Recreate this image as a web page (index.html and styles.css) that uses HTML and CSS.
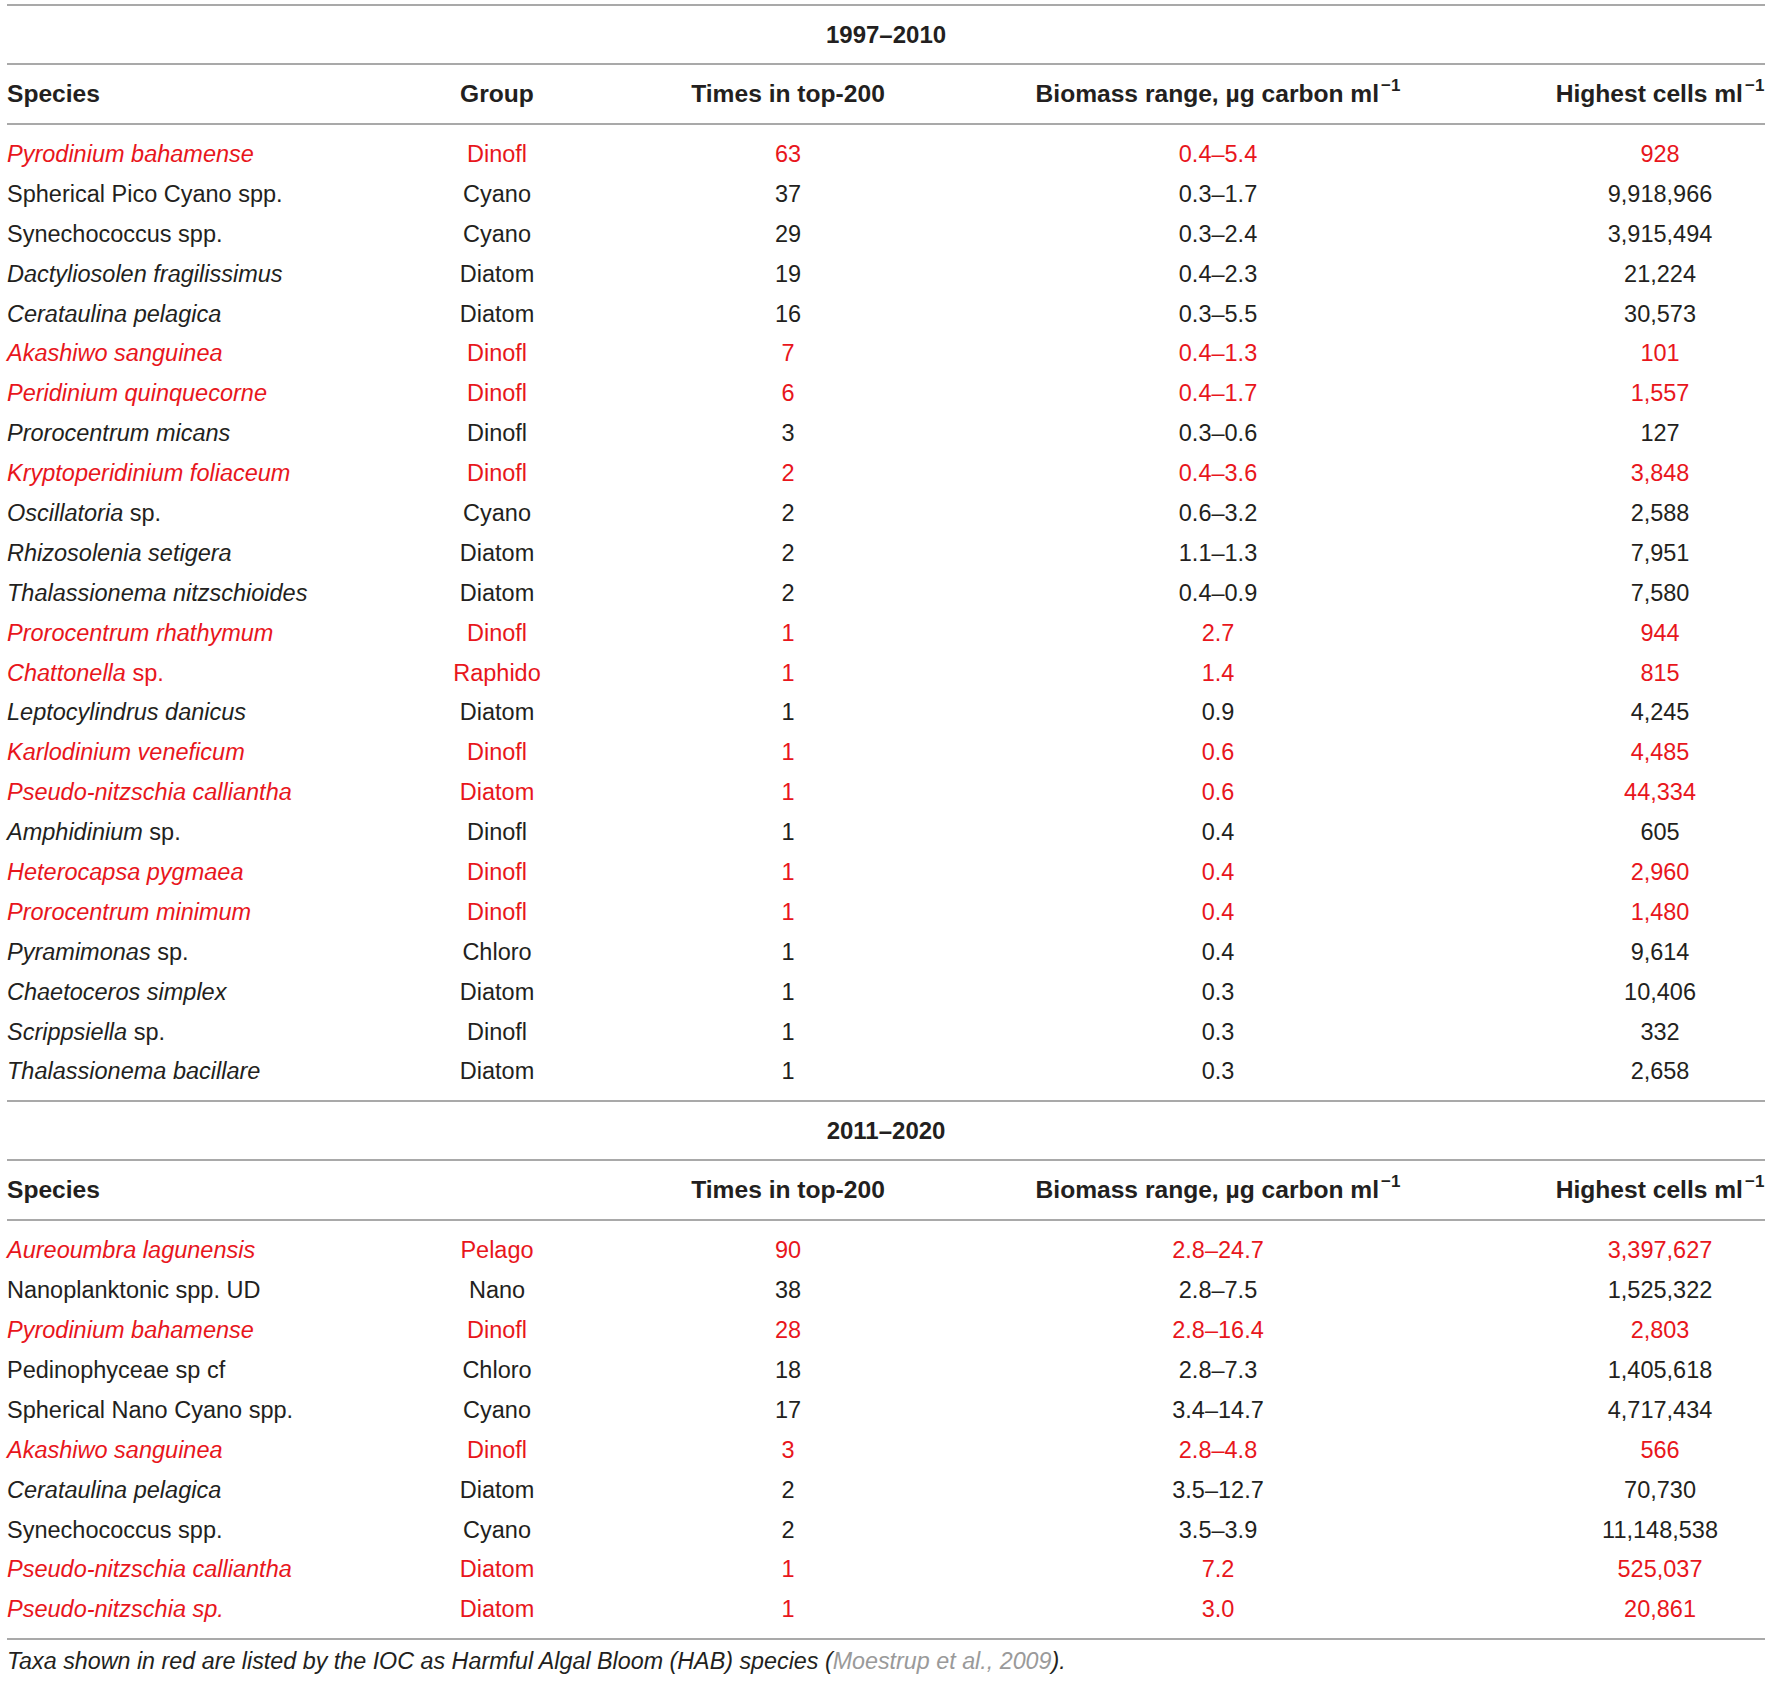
FILE: index.html
```html
<!DOCTYPE html>
<html lang="en">
<head>
<meta charset="utf-8">
<title>Top-200 phytoplankton taxa</title>
<link rel="stylesheet" href="styles.css">
</head>
<body>
<div class="wrap">
<table class="tbl">
<colgroup>
<col class="c-species"><col class="c-group"><col class="c-times"><col class="c-bio"><col class="c-high">
</colgroup>
<tbody>
<tr class="period"><th colspan="5">1997–2010</th></tr>
<tr class="head">
<th class="sp">Species</th><th>Group</th><th>Times in top-200</th><th>Biomass range, µg carbon ml<sup>−1</sup></th><th class="hi">Highest cells ml<sup>−1</sup></th>
</tr>
<tr class="hab first"><td class="sp"><i>Pyrodinium bahamense</i></td><td>Dinofl</td><td>63</td><td>0.4–5.4</td><td class="hi">928</td></tr>
<tr><td class="sp">Spherical Pico Cyano spp.</td><td>Cyano</td><td>37</td><td>0.3–1.7</td><td class="hi">9,918,966</td></tr>
<tr><td class="sp">Synechococcus spp.</td><td>Cyano</td><td>29</td><td>0.3–2.4</td><td class="hi">3,915,494</td></tr>
<tr><td class="sp"><i>Dactyliosolen fragilissimus</i></td><td>Diatom</td><td>19</td><td>0.4–2.3</td><td class="hi">21,224</td></tr>
<tr><td class="sp"><i>Cerataulina pelagica</i></td><td>Diatom</td><td>16</td><td>0.3–5.5</td><td class="hi">30,573</td></tr>
<tr class="hab"><td class="sp"><i>Akashiwo sanguinea</i></td><td>Dinofl</td><td>7</td><td>0.4–1.3</td><td class="hi">101</td></tr>
<tr class="hab"><td class="sp"><i>Peridinium quinquecorne</i></td><td>Dinofl</td><td>6</td><td>0.4–1.7</td><td class="hi">1,557</td></tr>
<tr><td class="sp"><i>Prorocentrum micans</i></td><td>Dinofl</td><td>3</td><td>0.3–0.6</td><td class="hi">127</td></tr>
<tr class="hab"><td class="sp"><i>Kryptoperidinium foliaceum</i></td><td>Dinofl</td><td>2</td><td>0.4–3.6</td><td class="hi">3,848</td></tr>
<tr><td class="sp"><i>Oscillatoria</i> sp.</td><td>Cyano</td><td>2</td><td>0.6–3.2</td><td class="hi">2,588</td></tr>
<tr><td class="sp"><i>Rhizosolenia setigera</i></td><td>Diatom</td><td>2</td><td>1.1–1.3</td><td class="hi">7,951</td></tr>
<tr><td class="sp"><i>Thalassionema nitzschioides</i></td><td>Diatom</td><td>2</td><td>0.4–0.9</td><td class="hi">7,580</td></tr>
<tr class="hab"><td class="sp"><i>Prorocentrum rhathymum</i></td><td>Dinofl</td><td>1</td><td>2.7</td><td class="hi">944</td></tr>
<tr class="hab"><td class="sp"><i>Chattonella</i> sp.</td><td>Raphido</td><td>1</td><td>1.4</td><td class="hi">815</td></tr>
<tr><td class="sp"><i>Leptocylindrus danicus</i></td><td>Diatom</td><td>1</td><td>0.9</td><td class="hi">4,245</td></tr>
<tr class="hab"><td class="sp"><i>Karlodinium veneficum</i></td><td>Dinofl</td><td>1</td><td>0.6</td><td class="hi">4,485</td></tr>
<tr class="hab"><td class="sp"><i>Pseudo-nitzschia calliantha</i></td><td>Diatom</td><td>1</td><td>0.6</td><td class="hi">44,334</td></tr>
<tr><td class="sp"><i>Amphidinium</i> sp.</td><td>Dinofl</td><td>1</td><td>0.4</td><td class="hi">605</td></tr>
<tr class="hab"><td class="sp"><i>Heterocapsa pygmaea</i></td><td>Dinofl</td><td>1</td><td>0.4</td><td class="hi">2,960</td></tr>
<tr class="hab"><td class="sp"><i>Prorocentrum minimum</i></td><td>Dinofl</td><td>1</td><td>0.4</td><td class="hi">1,480</td></tr>
<tr><td class="sp"><i>Pyramimonas</i> sp.</td><td>Chloro</td><td>1</td><td>0.4</td><td class="hi">9,614</td></tr>
<tr><td class="sp"><i>Chaetoceros simplex</i></td><td>Diatom</td><td>1</td><td>0.3</td><td class="hi">10,406</td></tr>
<tr><td class="sp"><i>Scrippsiella</i> sp.</td><td>Dinofl</td><td>1</td><td>0.3</td><td class="hi">332</td></tr>
<tr class="last"><td class="sp"><i>Thalassionema bacillare</i></td><td>Diatom</td><td>1</td><td>0.3</td><td class="hi">2,658</td></tr>

<tr class="period"><th colspan="5">2011–2020</th></tr>
<tr class="head">
<th class="sp">Species</th><th></th><th>Times in top-200</th><th>Biomass range, µg carbon ml<sup>−1</sup></th><th class="hi">Highest cells ml<sup>−1</sup></th>
</tr>
<tr class="hab first"><td class="sp"><i>Aureoumbra lagunensis</i></td><td>Pelago</td><td>90</td><td>2.8–24.7</td><td class="hi">3,397,627</td></tr>
<tr><td class="sp">Nanoplanktonic spp. UD</td><td>Nano</td><td>38</td><td>2.8–7.5</td><td class="hi">1,525,322</td></tr>
<tr class="hab"><td class="sp"><i>Pyrodinium bahamense</i></td><td>Dinofl</td><td>28</td><td>2.8–16.4</td><td class="hi">2,803</td></tr>
<tr><td class="sp">Pedinophyceae sp cf</td><td>Chloro</td><td>18</td><td>2.8–7.3</td><td class="hi">1,405,618</td></tr>
<tr><td class="sp">Spherical Nano Cyano spp.</td><td>Cyano</td><td>17</td><td>3.4–14.7</td><td class="hi">4,717,434</td></tr>
<tr class="hab"><td class="sp"><i>Akashiwo sanguinea</i></td><td>Dinofl</td><td>3</td><td>2.8–4.8</td><td class="hi">566</td></tr>
<tr><td class="sp"><i>Cerataulina pelagica</i></td><td>Diatom</td><td>2</td><td>3.5–12.7</td><td class="hi">70,730</td></tr>
<tr><td class="sp">Synechococcus spp.</td><td>Cyano</td><td>2</td><td>3.5–3.9</td><td class="hi">11,148,538</td></tr>
<tr class="hab"><td class="sp"><i>Pseudo-nitzschia calliantha</i></td><td>Diatom</td><td>1</td><td>7.2</td><td class="hi">525,037</td></tr>
<tr class="hab last"><td class="sp"><i>Pseudo-nitzschia sp.</i></td><td>Diatom</td><td>1</td><td>3.0</td><td class="hi">20,861</td></tr>
</tbody>
</table>
<p class="note"><i>Taxa shown in red are listed by the IOC as Harmful Algal Bloom (HAB) species (<span class="ref">Moestrup et al., 2009</span>).</i></p>
</div>
</body>
</html>
```

FILE: styles.css
```css
html, body {
  margin: 0;
  padding: 0;
  background: #ffffff;
}

body {
  font-family: "Liberation Sans", Arial, sans-serif;
  color: #231f20;
}

.wrap {
  padding: 4px 6px 0 7px;
}

.tbl {
  width: 1758px;
  border-collapse: collapse;
  table-layout: fixed;
  font-size: 23.5px;
  line-height: 28px;
}

.c-species { width: 433px; }
.c-group { width: 114px; }
.c-times { width: 468px; }
.c-bio { width: 392px; }
.c-high { width: 351px; }

.tbl th,
.tbl td {
  padding: 0;
  text-align: center;
  white-space: nowrap;
  vertical-align: middle;
}

.tbl td {
  height: 39.9px;
}

.tbl th {
  font-weight: bold;
  color: #231f20;
  font-size: 24.6px;
}

.tbl .sp {
  text-align: left;
}

.tbl .hi {
  padding-left: 141px;
}

.period th {
  height: 57px;
  border-top: 2px solid #a9a9a9;
  border-bottom: 2px solid #a9a9a9;
  font-size: 24px;
}

.head th {
  height: 58px;
  border-bottom: 2px solid #a9a9a9;
}

.head sup {
  font-size: 17px;
  line-height: 0;
  vertical-align: 11px;
  margin-left: 2px;
}

.first td {
  padding-top: 9px;
}

.last td {
  padding-bottom: 9px;
  border-bottom: 2px solid #a9a9a9;
}

.hab td {
  color: #e8161c;
}

.note {
  margin: 7px 0 0 0;
  font-size: 23.3px;
  line-height: 28px;
  color: #231f20;
}

.note .ref {
  color: #9a9a9a;
}
```
